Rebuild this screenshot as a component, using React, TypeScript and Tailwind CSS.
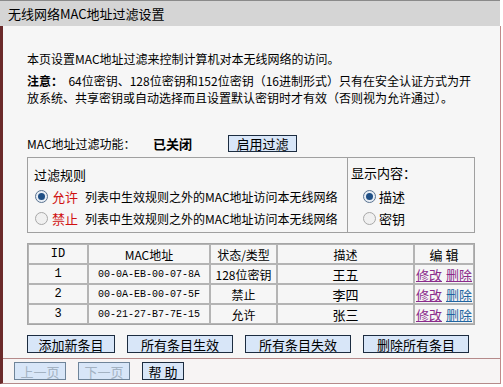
import React from "react";

const rows = [
  { id: "1", mac: "00-0A-EB-00-07-8A", state: "128位密钥", desc: "王五", delVisited: true },
  { id: "2", mac: "00-0A-EB-00-07-5F", state: "禁止", desc: "李四", delVisited: false },
  { id: "3", mac: "00-21-27-B7-7E-15", state: "允许", desc: "张三", delVisited: false },
];

function Radio({ checked }: { checked: boolean }) {
  return (
    <span
      className={`flex h-[13px] w-[13px] shrink-0 items-center justify-center rounded-full border ${
        checked ? "border-[#5a7390] bg-[#e8eef5]" : "border-[#a8a8a8] bg-[#f0f0f0]"
      }`}
    >
      {checked && <span className="h-[7px] w-[7px] rounded-full bg-[#1f4f85]" />}
    </span>
  );
}

function Btn({
  children,
  w,
  disabled,
}: {
  children: React.ReactNode;
  w: string;
  disabled?: boolean;
}) {
  return (
    <button
      className={`flex h-[18px] items-center justify-center border bg-[#d8e6f8] text-[13px] leading-none ${w} ${
        disabled ? "border-[#6f8499] text-[#a3b2c2]" : "border-[#1c2c40] text-black"
      }`}
    >
      {children}
    </button>
  );
}

export default function App() {
  return (
    <div
      className="h-[387px] w-[503px] overflow-hidden bg-white text-[12px] text-black"
      style={{ fontFamily: '"Noto Sans CJK SC", sans-serif' }}
    >
      {/* TITLE */}
      <div className="flex h-[26px] w-[500px] items-center border-t border-[#8a8a8a] bg-[#d5d5d5] pl-2 text-[13px]">
        无线网络MAC地址过滤设置
      </div>

      <div className="w-[501px] border-b border-l-[3px] border-r border-b-[#b58a8a] border-l-[#6b2a2a] border-r-[#c08a8a] bg-[#f6f6f6]">
        <div className="pl-[24px] pt-[24px] leading-[17px]">
          <p className="mb-[5px]">本页设置MAC地址过滤来控制计算机对本无线网络的访问。</p>
          <p className="whitespace-nowrap">
            <b>注意：</b>&nbsp;&nbsp;64位密钥、128位密钥和152位密钥（16进制形式）只有在安全认证方式为开
          </p>
          <p className="whitespace-nowrap">放系统、共享密钥或自动选择而且设置默认密钥时才有效（否则视为允许通过）。</p>

          {/* STATUS */}
          <div className="mt-[29px] flex h-[17px] items-center">
            <span className="w-[126px]">MAC地址过滤功能：</span>
            <b className="w-[75px] text-[13px]">已关闭</b>
            <button className="flex h-[17px] w-[69px] items-center justify-center border border-[#1c2c40] bg-[#d8e6f8] text-[13px] leading-none">
              启用过滤
            </button>
          </div>

          {/* RULES */}
          <div className="mt-[5px] flex h-[76px] w-[448px] border border-[#a0a0a0] leading-[17px]">
            <div className="w-[320px] border-r border-[#a0a0a0] pl-[6px]">
              <div className="mt-[8px] text-[13px]">过滤规则</div>
              <div className="mt-[5px] flex items-center gap-[4px] whitespace-nowrap pl-[1px]">
                <Radio checked />
                <span className="text-[13px] text-[#d01010]">允许</span>
                <span className="ml-[3px]">列表中生效规则之外的MAC地址访问本无线网络</span>
              </div>
              <div className="mt-[5px] flex items-center gap-[4px] whitespace-nowrap pl-[1px]">
                <Radio checked={false} />
                <span className="text-[13px] text-[#d01010]">禁止</span>
                <span className="ml-[3px]">列表中生效规则之外的MAC地址访问本无线网络</span>
              </div>
            </div>
            <div className="flex-1 pl-[3px]">
              <div className="mt-[6px] text-[13px]">显示内容：</div>
              <div className="mt-[7px] flex items-center gap-[3px] pl-[12px]">
                <Radio checked />
                <span className="text-[13px]">描述</span>
              </div>
              <div className="mt-[5px] flex items-center gap-[3px] pl-[12px]">
                <Radio checked={false} />
                <span className="text-[13px]">密钥</span>
              </div>
            </div>
          </div>

          {/* TABLE */}
          <table className="mt-[10px] w-[448px] table-fixed border-separate border-spacing-0 border border-[#a6a6a6] text-center">
            <colgroup>
              <col className="w-[60px]" />
              <col className="w-[122px]" />
              <col className="w-[67px]" />
              <col className="w-[137px]" />
              <col />
            </colgroup>
            <thead>
              <tr className="h-[20px]">
                <th className="border border-[#b4b4b4] font-normal" style={{ fontFamily: '"Liberation Mono", monospace' }}>
                  <span className="text-[12px]">ID</span>
                </th>
                <th className="border border-[#b4b4b4] font-normal">
                  <span className="text-[12px]">MAC地址</span>
                </th>
                <th className="border border-[#b4b4b4] font-normal">状态/类型</th>
                <th className="border border-[#b4b4b4] font-normal">描述</th>
                <th className="border border-[#b4b4b4] text-[13px] font-normal">编&nbsp;辑</th>
              </tr>
            </thead>
            <tbody>
              {rows.map((r) => (
                <tr key={r.id} className="h-[20px]">
                  <td className="border border-[#b4b4b4] text-[12px]" style={{ fontFamily: '"Liberation Mono", monospace' }}>
                    {r.id}
                  </td>
                  <td className="border border-[#b4b4b4] text-[10px]" style={{ fontFamily: '"Liberation Mono", monospace' }}>
                    {r.mac}
                  </td>
                  <td className="border border-[#b4b4b4] text-[12px]">{r.state}</td>
                  <td className="border border-[#b4b4b4] text-[13px]">{r.desc}</td>
                  <td className="border border-[#b4b4b4] text-[13px]">
                    <span className="text-[#8a2a8a] underline">修改</span>
                    <span className={`ml-[4px] underline ${r.delVisited ? "text-[#8a2a8a]" : "text-[#1f64a0]"}`}>
                      删除
                    </span>
                  </td>
                </tr>
              ))}
            </tbody>
          </table>

          {/* ACTIONS */}
          <div className="mt-[10px] flex gap-[12px] pb-[5px]">
            <Btn w="w-[88px]">添加新条目</Btn>
            <Btn w="w-[106px]">所有条目生效</Btn>
            <Btn w="w-[106px]">所有条目失效</Btn>
            <Btn w="w-[106px]">删除所有条目</Btn>
          </div>
        </div>

        {/* FOOTER */}
        <div className="flex h-[25px] items-center gap-[12px] border-t border-[#b58a8a] bg-[#f7f4f4] pl-[11px]">
          <Btn w="w-[52px]" disabled>
            上一页
          </Btn>
          <Btn w="w-[52px]" disabled>
            下一页
          </Btn>
          <Btn w="w-[42px]">帮&nbsp;助</Btn>
        </div>
      </div>
    </div>
  );
}
